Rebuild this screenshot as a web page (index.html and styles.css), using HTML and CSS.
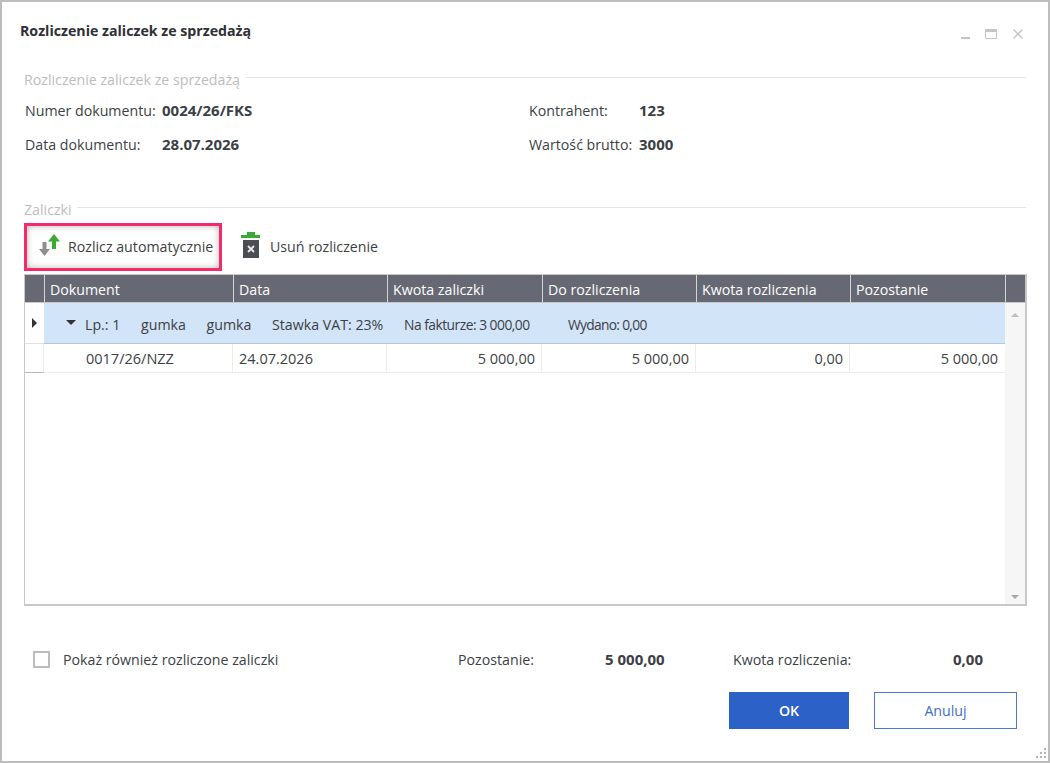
FILE: index.html
```html
<!DOCTYPE html>
<html lang="pl">
<head>
    <meta charset="UTF-8">
    <title>Rozliczenie zaliczek ze sprzedażą</title>
    <link rel="stylesheet" href="styles.css">
</head>
<body>
    <div class="window">
        <header class="titlebar">
            <h1>Rozliczenie zaliczek ze sprzedażą</h1>
            <div class="win-buttons">
                <svg width="12" height="12" viewBox="0 0 12 12"><rect x="3" y="9" width="9" height="2" fill="#c4c4c4"/></svg>
                <svg width="12" height="12" viewBox="0 0 12 12"><path d="M.5 1.500h11v9H.5z" fill="none" stroke="#c4c4c4"/><rect x="1" y="2" width="10" height="2" fill="#c4c4c4"/></svg>
                <svg width="12" height="12" viewBox="0 0 12 12"><path d="M1.500 1.500l9 9M10.500 1.500l-9 9" fill="none" stroke="#c4c4c4" stroke-width="1.400"/></svg>
            </div>
        </header>

        <div class="section-title"><span>Rozliczenie zaliczek ze sprzedażą</span></div>
        <div class="doc-info">
            <div class="field"><span class="lbl">Numer dokumentu:</span><b>0024/26/FKS</b></div>
            <div class="field"><span class="lbl lbl-right">Kontrahent:</span><b>123</b></div>
            <div class="field"><span class="lbl">Data dokumentu:</span><b>28.07.2026</b></div>
            <div class="field"><span class="lbl lbl-right">Wartość brutto:</span><b>3000</b></div>
        </div>

        <div class="section-title section-second"><span>Zaliczki</span></div>
        <div class="toolbar">
            <button class="tool tool-marked">
                <svg width="24" height="24" viewBox="0 0 24 24">
                    <path d="M4.500 8H8.500V15H12L6.500 22L1 15H4.500Z" fill="#8f8f8f"/>
                    <path d="M14 15V7.500H10L16 0L22 7.500H18V15Z" fill="#3aaa35"/>
                </svg>
                Rozlicz automatycznie
            </button>
            <button class="tool tool-remove">
                <svg width="20" height="28" viewBox="0 0 20 28">
                    <path d="M7 0h8v3h5v3H1V3h6z" fill="#3aaa35"/>
                    <rect x="3" y="8" width="16" height="18" fill="#4a4d52"/>
                    <path d="M8 14l6 6M14 14l-6 6" stroke="#e8e8e8" stroke-width="1.800"/>
                </svg>
                Usuń rozliczenie
            </button>
        </div>

        <div class="grid">
            <div class="grid-row grid-head">
                <div class="ind"></div>
                <div class="cell">Dokument</div>
                <div class="cell">Data</div>
                <div class="cell">Kwota zaliczki</div>
                <div class="cell">Do rozliczenia</div>
                <div class="cell">Kwota rozliczenia</div>
                <div class="cell">Pozostanie</div>
                <div class="head-end"></div>
            </div>
            <div class="grid-body">
                <div class="rows">
                    <div class="group-row">
                        <div class="ind"><span class="arrow-right"></span></div>
                        <div class="group-info">
                            <span class="arrow-down"></span>
                            <span class="g-lp">Lp.: 1</span>
                            <span class="g-name">gumka</span>
                            <span class="g-name">gumka</span>
                            <span class="g-vat">Stawka VAT: 23%</span>
                            <span class="g-fak">Na fakturze: 3 000,00</span>
                            <span class="g-wyd">Wydano: 0,00</span>
                        </div>
                    </div>
                    <div class="grid-row data-row">
                        <div class="ind"></div>
                        <div class="cell cell-doc">0017/26/NZZ</div>
                        <div class="cell">24.07.2026</div>
                        <div class="cell num">5 000,00</div>
                        <div class="cell num">5 000,00</div>
                        <div class="cell num">0,00</div>
                        <div class="cell num">5 000,00</div>
                    </div>
                </div>
                <div class="scrollbar">
                    <span class="sb-up"></span>
                    <span class="sb-down"></span>
                </div>
            </div>
        </div>

        <div class="summary">
            <label class="check"><span class="box"></span>Pokaż również rozliczone zaliczki</label>
            <span class="sum-left">Pozostanie:</span>
            <b class="sum-val-left">5 000,00</b>
            <span class="sum-right">Kwota rozliczenia:</span>
            <b>0,00</b>
        </div>

        <div class="actions">
            <button class="btn btn-ok">OK</button>
            <button class="btn btn-cancel">Anuluj</button>
        </div>

        <svg class="grip" width="14" height="14" viewBox="0 0 14 14" fill="#b4b4b4">
            <rect x="10" y="1" width="2" height="2"/>
            <rect x="6" y="5" width="2" height="2"/><rect x="10" y="5" width="2" height="2"/>
            <rect x="2" y="9" width="2" height="2"/><rect x="6" y="9" width="2" height="2"/><rect x="10" y="9" width="2" height="2"/>
        </svg>
    </div>
</body>
</html>
```

FILE: styles.css
```css
* {
    box-sizing: border-box;
    margin: 0;
    padding: 0;
    font-family: 'Open Sans', 'Noto Sans', sans-serif;
}

body {
    background: #fff;
    color: #3c3f45;
    font-size: 14.2px;
    width: 1050px;
    height: 763px;
    overflow: hidden;
}

b {
    font-size: 15px;
    color: #3c3f45;
}

.window {
    position: relative;
    width: 1050px;
    height: 763px;
    border: 2px solid #bdbdbd;
    padding: 0 22px;
}

.titlebar {
    display: flex;
    justify-content: space-between;
    height: 66px;
    margin-left: -4px;
    padding-top: 19px;
}

h1 {
    font-size: 14.2px;
    font-weight: 700;
    line-height: 20px;
    color: #2e3035;
}

.win-buttons {
    display: flex;
    gap: 15px;
    height: 12px;
    margin: 7px 2px 0 0;
}

.section-title {
    display: flex;
    align-items: center;
    gap: 5px;
    height: 20px;
    color: #bdbdbd;
}

.section-title span {
    margin-top: 3px;
}

.section-title::after {
    content: "";
    flex: 1;
    height: 1px;
    background: #e6e6e6;
    margin-top: -1px;
}

.section-second {
    margin-top: 37px;
}

.doc-info {
    display: grid;
    grid-template-columns: 504px 1fr;
    grid-auto-rows: 34px;
    padding: 5px 0 0 1px;
}

.field {
    display: flex;
    align-items: center;
    height: 34px;
}

.lbl {
    width: 137px;
}

.lbl-right {
    width: 110px;
}

.toolbar {
    display: flex;
    align-items: center;
    gap: 18px;
    height: 48px;
    margin-top: 5px;
}

.tool {
    display: flex;
    align-items: center;
    height: 48px;
    padding-bottom: 2px;
    border: none;
    background: none;
    font-size: 14.2px;
    color: #3c3f45;
}

.tool-marked {
    width: 198px;
    gap: 6px;
    padding-left: 11px;
    border: 3px solid #f52a6b;
    box-shadow: inset 0 0 6px rgba(0, 0, 0, 0.3);
    background: #fff;
}

.tool-remove {
    gap: 10px;
}

.grid {
    display: flex;
    flex-direction: column;
    width: 1003px;
    height: 332px;
    margin-top: 3px;
    border: 1px solid #c8c8c8;
    border-width: 0 2px 2px 1px;
}

.grid-row {
    display: grid;
    grid-template-columns: 19px 189px 154px 155px 154px 154px 155px 1fr;
}

.grid-head {
    height: 29px;
    background: #666973;
    color: #fff;
    border-top: 1px solid #c8c8c8;
    border-bottom: 1px solid #c8c8c8;
}

.grid-head .cell {
    display: flex;
    align-items: center;
    border-left: 1px solid #d5d5d5;
    padding: 2px 0 0 5px;
}

.head-end {
    border-left: 1px solid #d5d5d5;
}

.grid-body {
    flex: 1;
    display: flex;
}

.rows {
    width: 980px;
}

.group-row {
    display: flex;
    height: 41px;
}

.group-row .ind {
    width: 19px;
    display: flex;
    align-items: center;
    justify-content: center;
    border-bottom: 1px solid #e0e0e0;
}

.arrow-right {
    border-left: 5px solid #333;
    border-top: 5px solid transparent;
    border-bottom: 5px solid transparent;
}

.group-info {
    flex: 1;
    display: flex;
    align-items: center;
    background: #d2e4f8;
    border-bottom: 1px solid #bcc6d0;
    padding: 2px 0 0 22px;
}

.arrow-down {
    border-top: 5px solid #333;
    border-left: 5px solid transparent;
    border-right: 5px solid transparent;
    margin: -4px 9px 0 0;
}

.g-lp {
    width: 56px;
}

.g-name {
    width: 65.500px;
}

.g-vat {
    width: 132px;
}

.g-fak {
    width: 164px;
    font-size: 13.800px;
    letter-spacing: -0.5px;
}

.g-wyd {
    font-size: 13.800px;
    letter-spacing: -0.7px;
}

.data-row {
    grid-template-columns: 19px 189px 154px 155px 154px 154px 155px;
    height: 29px;
    border-bottom: 1px solid #ececec;
    font-size: 14.500px;
}

.data-row .ind {
    border-bottom: 1px solid #bbb;
    margin-bottom: -1px;
    border-right: 1px solid #ececec;
}

.data-row .cell {
    display: flex;
    align-items: center;
    padding: 0 6px;
    border-right: 1px solid #ececec;
}

.data-row .cell-doc {
    padding-left: 42px;
}

.data-row .cell:last-child {
    border-right: none;
    padding-right: 7px;
}

.data-row .num {
    justify-content: flex-end;
}

.scrollbar {
    flex: 1;
    background: #f6f6f6;
    display: flex;
    flex-direction: column;
    justify-content: space-between;
    align-items: center;
    padding: 10px 0 5px;
}

.sb-up {
    border-bottom: 4px solid #bdbdbd;
    border-left: 4px solid transparent;
    border-right: 4px solid transparent;
}

.sb-down {
    border-top: 4px solid #a8a8a8;
    border-left: 4px solid transparent;
    border-right: 4px solid transparent;
}

.summary {
    display: flex;
    align-items: center;
    height: 24px;
    margin-top: 41px;
    padding-left: 9px;
}

.check {
    display: flex;
    align-items: center;
    gap: 13px;
    width: 425px;
}

.box {
    width: 17px;
    height: 17px;
    border: 2px solid #bdbdbd;
    background: #fff;
}

.sum-left {
    width: 147px;
}

.sum-val-left {
    width: 128px;
}

.sum-right {
    width: 220px;
}

.actions {
    display: flex;
    justify-content: flex-end;
    gap: 25px;
    margin: 21px 9px 0 0;
}

.btn {
    height: 37px;
    font-size: 14.2px;
}

.btn-ok {
    width: 120px;
    border: none;
    background: #2c62c8;
    color: #fff;
    font-weight: 600;
}

.btn-cancel {
    width: 143px;
    border: 1.500px solid #4a78d8;
    background: #fff;
    color: #3f6fc8;
}

.grip {
    position: absolute;
    right: 0;
    bottom: 0;
}
```
